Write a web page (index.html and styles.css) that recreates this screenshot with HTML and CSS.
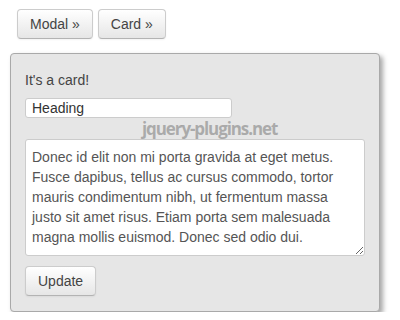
FILE: index.html
```html
<!DOCTYPE html>
<html>
<head>
<meta charset="utf-8">
<link rel="stylesheet" href="styles.css">
</head>
<body>
<div class="toolbar">
  <button class="btn">Modal »</button>
  <button class="btn">Card »</button>
</div>
<div class="card">
  <p class="title">It's a card!</p>
  <input class="heading" type="text" value="Heading">
  <textarea class="body-text">Donec id elit non mi porta gravida at eget metus. Fusce dapibus, tellus ac cursus commodo, tortor mauris condimentum nibh, ut fermentum massa justo sit amet risus. Etiam porta sem malesuada magna mollis euismod. Donec sed odio dui.</textarea>
  <button class="btn">Update</button>
  <div class="watermark">jquery-plugins.net</div>
</div>
</body>
</html>
```
FILE: styles.css
```css
html, body {
  margin: 0;
  padding: 0;
  background: #fff;
  font-family: "Liberation Sans", Arial, sans-serif;
  font-size: 14px;
  color: #444;
}
.toolbar {
  display: flex;
  gap: 5px;
  padding: 9px 0 0 17px;
  height: 30px;
}
.btn {
  font-family: "Liberation Sans", Arial, sans-serif;
  font-size: 14px;
  line-height: 20px;
  color: #444;
  padding: 4px 12px;
  height: 30px;
  border: 1px solid #cccccc;
  border-bottom-color: #b3b3b3;
  border-radius: 4px;
  background: linear-gradient(#ffffff, #e6e6e6);
  box-shadow: inset 0 1px 0 rgba(255,255,255,.2), 0 1px 2px rgba(0,0,0,.05);
  margin: 0;
}
.card {
  position: relative;
  margin: 14px 0 0 10px;
  width: 340px;
  padding: 14px 14px 15px 14px;
  border: 1px solid #a9a9a9;
  border-radius: 4px;
  background: #e6e6e6;
  box-shadow: 3px 3px 5px rgba(0,0,0,.35);
}
.title {
  margin: 0;
  line-height: 20px;
  padding-top: 2px;
  height: 28px;
}
.heading {
  display: block;
  box-sizing: border-box;
  width: 207px;
  height: 20px;
  margin: 0 0 21px 0;
  padding: 0 6px;
  border: 1px solid #cccccc;
  border-radius: 3px;
  background: #fff;
  font-family: "Liberation Sans", Arial, sans-serif;
  font-size: 14px;
  color: #333;
}
.body-text {
  display: block;
  box-sizing: border-box;
  width: 340px;
  height: 117px;
  margin: 0 0 10px 0;
  padding: 7px 6px;
  border: 1px solid #cccccc;
  border-radius: 3px;
  background: #fff;
  font-family: "Liberation Sans", Arial, sans-serif;
  font-size: 14px;
  line-height: 20px;
  color: #555;
  resize: vertical;
}
.watermark {
  position: absolute;
  left: 131px;
  top: 63px;
  font-family: "Open Sans", sans-serif;
  font-weight: bold;
  font-size: 17px;
  letter-spacing: -1.1px;
  color: rgba(130,130,130,.6);
  pointer-events: none;
}
```
